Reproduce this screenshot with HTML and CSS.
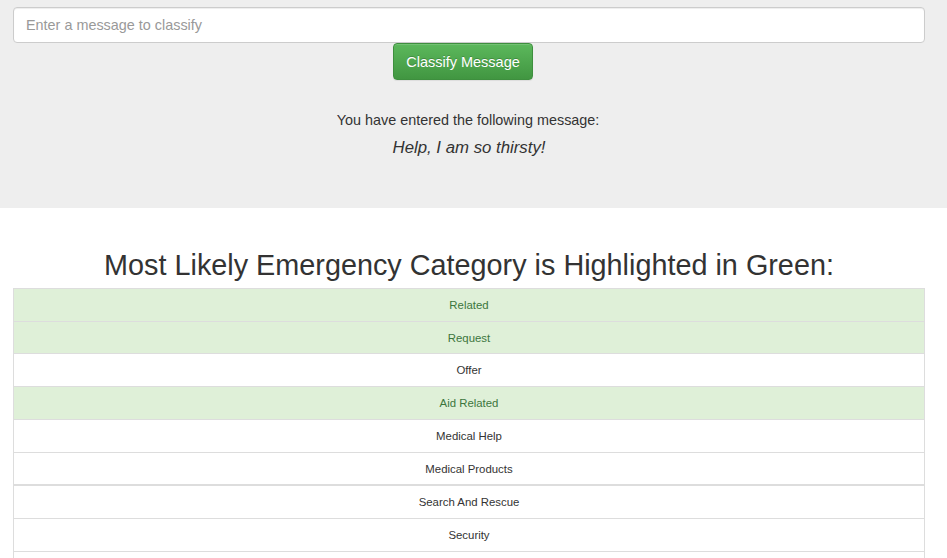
FILE: index.html
```html
<!DOCTYPE html>
<html>
<head>
<meta charset="utf-8">
<link rel="stylesheet" href="styles.css">
</head>
<body>
<div class="jumbotron">
  <div class="inner">
    <input class="form-control" type="text" placeholder="Enter a message to classify">
    <div class="btn-row"><button class="btn-success">Classify Message</button></div>
    <p class="entered">You have entered the following message:</p>
    <p class="message">Help, I am so thirsty!</p>
  </div>
</div>
<div class="content">
  <h2 class="title">Most Likely Emergency Category is Highlighted in Green:</h2>
  <table class="cats">
    <tbody>
      <tr class="success"><td>Related</td></tr>
      <tr class="success"><td>Request</td></tr>
      <tr><td>Offer</td></tr>
      <tr class="success"><td>Aid Related</td></tr>
      <tr><td>Medical Help</td></tr>
      <tr><td>Medical Products</td></tr>
    </tbody>
    <tbody class="second">
      <tr><td>Search And Rescue</td></tr>
      <tr><td>Security</td></tr>
      <tr><td>Military</td></tr>
    </tbody>
  </table>
</div>
</body>
</html>
```
FILE: styles.css
```css
html, body {
  margin: 0;
  padding: 0;
  background: #fff;
  font-family: "Liberation Sans", Arial, sans-serif;
  color: #333;
  overflow: hidden;
}
.jumbotron {
  background: #eee;
  height: 208px;
  box-sizing: border-box;
  padding-top: 7px;
}
.inner {
  margin-left: 13px;
  width: 912px;
  display: flex;
  flex-direction: column;
  align-items: stretch;
}
.form-control {
  box-sizing: border-box;
  height: 36px;
  width: 100%;
  padding: 6px 12px;
  font-family: inherit;
  font-size: 14.4px;
  color: #555;
  background: #fff;
  border: 1px solid #ccc;
  border-radius: 4px;
  box-shadow: inset 0 1px 1px rgba(0,0,0,.075);
  outline: none;
  margin: 0;
}
.form-control::placeholder {
  color: #999;
}
.btn-row {
  display: flex;
  justify-content: center;
  padding-right: 12px;
}
.btn-success {
  height: 37px;
  width: 140px;
  padding: 0;
  font-family: inherit;
  font-size: 14.5px;
  color: #fff;
  text-shadow: 0 -1px 0 rgba(0,0,0,.2);
  background-image: linear-gradient(to bottom, #5cb85c 0, #419641 100%);
  border: 1px solid #3e8f3e;
  border-radius: 4px;
  box-shadow: inset 0 1px 0 rgba(255,255,255,.15), 0 1px 1px rgba(0,0,0,.075);
}
.entered {
  margin: 30px 0 0;
  padding-right: 2px;
  text-align: center;
  font-size: 14.4px;
  line-height: 20px;
}
.message {
  margin: 7px 0 0;
  text-align: center;
  font-size: 16.8px;
  font-style: italic;
  line-height: 22px;
}
.content {
  margin-left: 13px;
  width: 912px;
}
.title {
  margin: 0;
  padding-top: 39px;
  font-weight: 400;
  font-size: 28.8px;
  line-height: 36px;
  height: 41px;
  text-align: center;
  color: #333;
}
.cats {
  width: 100%;
  border-collapse: collapse;
  border: 1px solid #ddd;
  font-size: 11.4px;
}
.cats td {
  border: 1px solid #ddd;
  padding: 8px 8px 7px;
  line-height: 16.7px;
  text-align: center;
  color: #333;
}
.cats tr.success td {
  background: #dff0d8;
  color: #3c763d;
}
.cats tbody.second {
  border-top: 2px solid #ddd;
}
```
